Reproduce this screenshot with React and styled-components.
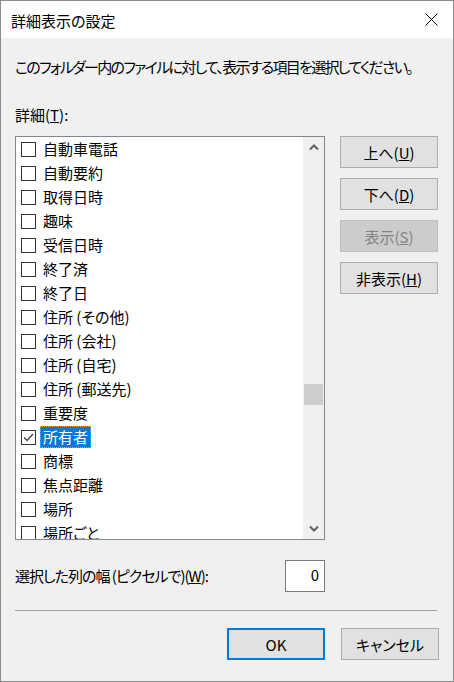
import React, { useLayoutEffect, useRef, useState } from "react";
import styled, { createGlobalStyle } from "styled-components";

const GlobalStyle = createGlobalStyle`
  html, body {
    margin: 0;
    padding: 0;
    background: #f0f0f0;
  }
  body {
    font-family: "Noto Sans CJK JP", "Noto Sans", sans-serif;
    font-size: 15px;
    color: #000;
    font-feature-settings: "palt";
  }
`;

const Window = styled.div`
  width: 454px;
  height: 682px;
  box-sizing: border-box;
  border: 1px solid #8c8c8c;
  background: #f0f0f0;
  display: flex;
  flex-direction: column;
`;

const TitleBar = styled.div`
  height: 37px;
  background: #fff;
  display: flex;
  align-items: center;
  justify-content: space-between;
  padding: 0 15px 0 10px;
  flex-shrink: 0;
`;

const Title = styled.div`
  font-size: 15px;
  line-height: 20px;
  margin-top: 2px;
`;

const Content = styled.div`
  flex: 1;
  display: flex;
  flex-direction: column;
  padding: 0 15px 0 14px;
`;

const Text = styled.div`
  line-height: 20px;
  margin-top: ${p => p.$top || 0}px;
  white-space: nowrap;
`;

const Fit = styled.span`
  display: inline-block;
  white-space: nowrap;
`;

const Main = styled.div`
  display: flex;
  gap: 15px;
  margin-top: 11px;
`;

const ListBox = styled.div`
  width: 310px;
  height: 404px;
  box-sizing: border-box;
  border: 1px solid #828790;
  background: #fff;
  display: flex;
  overflow: hidden;
`;

const Items = styled.div`
  flex: 1;
  padding: 0 0 0 5px;
  overflow: hidden;
`;

const Row = styled.div`
  height: 24px;
  display: flex;
  align-items: center;
  gap: 4px;
`;

const Box = styled.span`
  width: 15px;
  height: 15px;
  box-sizing: border-box;
  border: 1px solid #333;
  background: #fff;
  display: flex;
  align-items: center;
  justify-content: center;
  flex-shrink: 0;
`;

const Label = styled.span`
  height: 22px;
  line-height: 21px;
  padding: 0 3px;
  box-sizing: border-box;
  white-space: nowrap;
  ${p =>
    p.$selected &&
    `
    background: #0078d7;
    color: #fff;
    outline: 1px dotted #e8a040;
    outline-offset: -1px;
  `}
`;

const ScrollBar = styled.div`
  width: 21px;
  background: #f0f0f0;
  display: flex;
  flex-direction: column;
  align-items: center;
`;

const Arrow = styled.div`
  height: 21px;
  width: 100%;
  display: flex;
  align-items: center;
  justify-content: center;
`;

const Track = styled.div`
  flex: 1;
  width: 100%;
  display: flex;
  flex-direction: column;
`;

const Thumb = styled.div`
  margin-top: ${p => p.$top}px;
  height: 21px;
  width: 19px;
  margin-left: 1px;
  background: #cdcdcd;
`;

const SideButtons = styled.div`
  display: flex;
  flex-direction: column;
  gap: 10px;
`;

const Button = styled.button`
  width: 98px;
  height: 32px;
  box-sizing: border-box;
  font-family: inherit;
  font-size: 15px;
  font-feature-settings: "palt";
  padding: 0;
  background: ${p => (p.disabled ? "#cccccc" : "#e1e1e1")};
  color: ${p => (p.disabled ? "#838383" : "#000")};
  border: ${p => (p.$default ? "2px solid #0078d7" : p.disabled ? "1px solid #bfbfbf" : "1px solid #adadad")};
`;

const WidthRow = styled.div`
  display: flex;
  align-items: center;
  justify-content: space-between;
  width: 310px;
  margin-top: 20px;
`;

const NumberInput = styled.div`
  width: 40px;
  height: 32px;
  box-sizing: border-box;
  border: 1px solid #7a7a7a;
  background: #fff;
  text-align: right;
  padding: 4px 5px 0 0;
  line-height: 20px;
`;

const Separator = styled.div`
  height: 1px;
  width: 422px;
  background: #a0a0a0;
  margin-top: 18px;
`;

const Footer = styled.div`
  display: flex;
  justify-content: flex-end;
  gap: 16px;
  margin-top: 17px;
  width: 424px;
`;

const items = [
  "自動車電話",
  "自動要約",
  "取得日時",
  "趣味",
  "受信日時",
  "終了済",
  "終了日",
  "住所 (その他)",
  "住所 (会社)",
  "住所 (自宅)",
  "住所 (郵送先)",
  "重要度",
  "所有者",
  "商標",
  "焦点距離",
  "場所",
  "場所ごと",
];

// squeezes letter-spacing so the text spans the width the native dialog gives it
const FitText = ({ width, children }) => {
  const ref = useRef(null);
  const [spacing, setSpacing] = useState(0);
  useLayoutEffect(() => {
    const el = ref.current;
    if (!el) return;
    el.style.letterSpacing = "0px";
    const natural = el.getBoundingClientRect().width;
    const count = Array.from(el.textContent).length;
    el.style.letterSpacing = "";
    if (count > 0) setSpacing((width - natural) / count);
  }, [width]);
  return (
    <Fit ref={ref} style={{ letterSpacing: `${spacing}px` }}>
      {children}
    </Fit>
  );
};

const Check = () => (
  <svg width="13" height="13" viewBox="0 0 13 13">
    <path d="M2 6.5 L5 9.5 L11 3" fill="none" stroke="#333" strokeWidth="1.2" />
  </svg>
);

const Chevron = ({ down }) => (
  <svg width="10" height="7" viewBox="0 0 10 7">
    <path
      d={down ? "M1 1.5 L5 5.5 L9 1.5" : "M1 5.5 L5 1.5 L9 5.5"}
      fill="none"
      stroke="#606060"
      strokeWidth="2"
    />
  </svg>
);

const App = () => {
  return (
    <>
      <GlobalStyle />
      <Window>
        <TitleBar>
          <Title>詳細表示の設定</Title>
          <svg width="13" height="13" viewBox="0 0 13 13">
            <path d="M0.5 0.5 L12.5 12.5 M12.5 0.5 L0.5 12.5" stroke="#000" strokeWidth="1" />
          </svg>
        </TitleBar>
        <Content>
          <Text $top={19}>
            <FitText width={397}>このフォルダー内のファイルに対して、表示する項目を選択してください。</FitText>
          </Text>
          <Text $top={28}>
            詳細(<u>T</u>):
          </Text>
          <Main>
            <ListBox>
              <Items>
                {items.map(name => {
                  const selected = name === "所有者";
                  return (
                    <Row key={name}>
                      <Box>{selected && <Check />}</Box>
                      <Label $selected={selected}>{name}</Label>
                    </Row>
                  );
                })}
              </Items>
              <ScrollBar>
                <Arrow>
                  <Chevron />
                </Arrow>
                <Track>
                  <Thumb $top={226} />
                </Track>
                <Arrow>
                  <Chevron down />
                </Arrow>
              </ScrollBar>
            </ListBox>
            <SideButtons>
              <Button>
                上へ(<u>U</u>)
              </Button>
              <Button>
                下へ(<u>D</u>)
              </Button>
              <Button disabled>
                表示(<u>S</u>)
              </Button>
              <Button>
                非表示(<u>H</u>)
              </Button>
            </SideButtons>
          </Main>
          <WidthRow>
            <Text>
              <FitText width={193}>
                選択した列の幅 (ピクセルで)(<u>W</u>):
              </FitText>
            </Text>
            <NumberInput>0</NumberInput>
          </WidthRow>
          <Separator />
          <Footer>
            <Button $default>OK</Button>
            <Button>キャンセル</Button>
          </Footer>
        </Content>
      </Window>
    </>
  );
};

export default App;
